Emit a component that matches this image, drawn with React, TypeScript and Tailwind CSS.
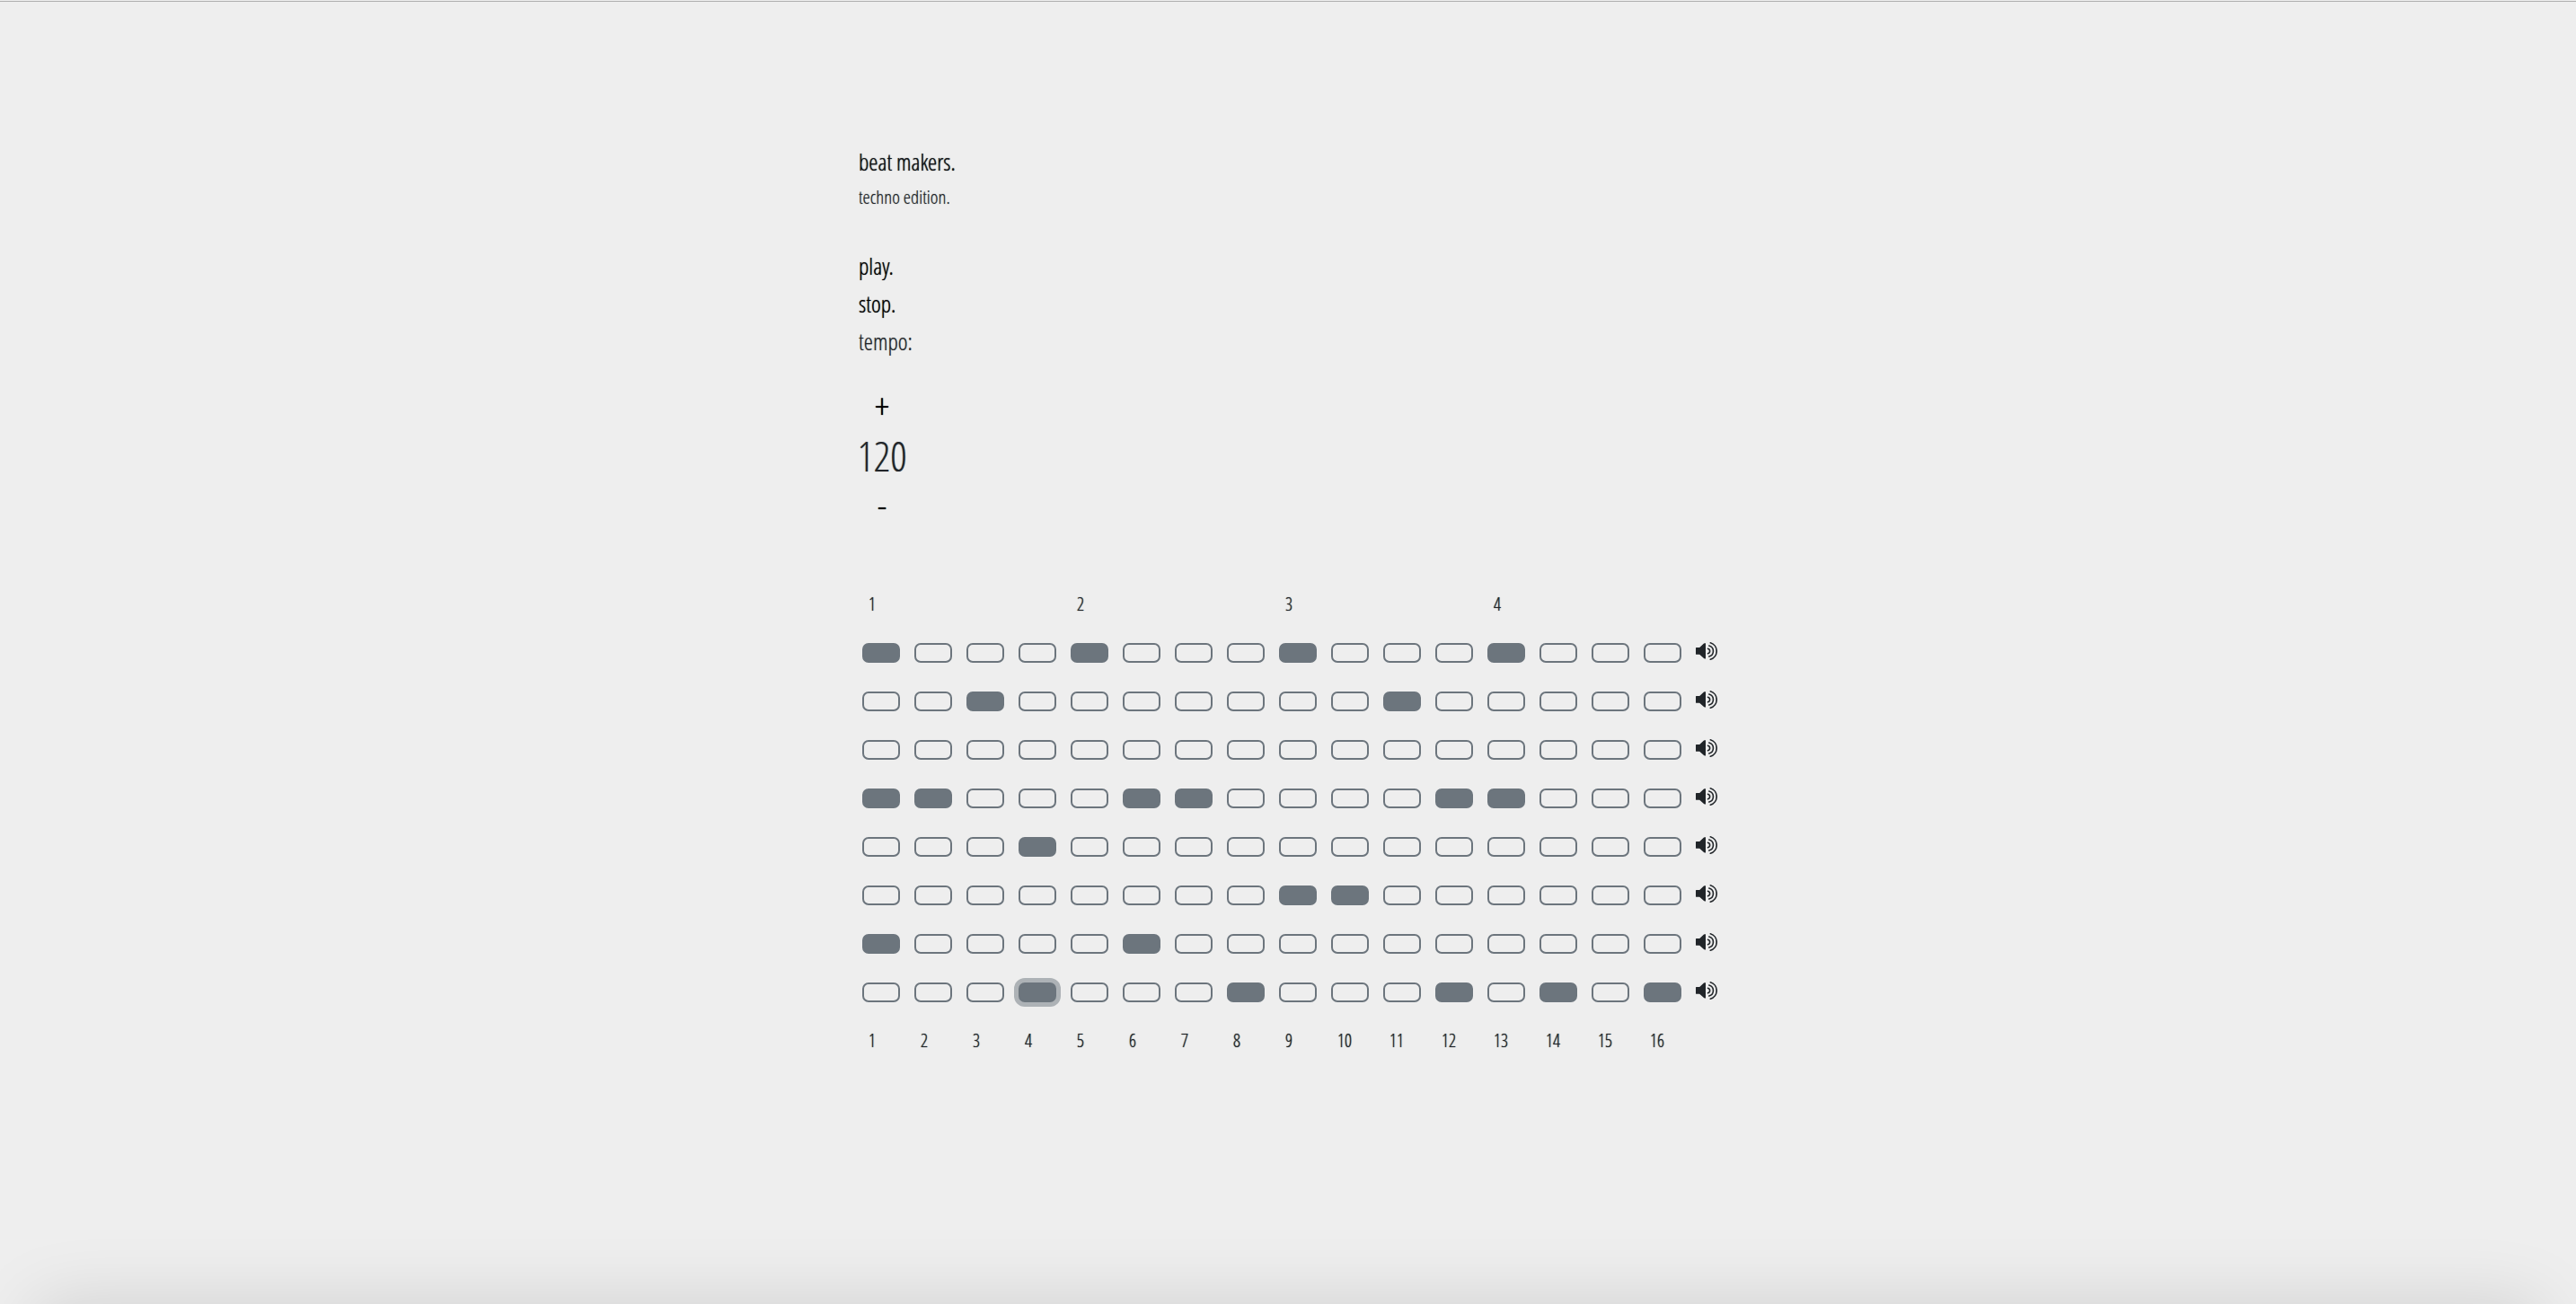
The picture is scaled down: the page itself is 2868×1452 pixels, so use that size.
import { useState } from 'react';

const STEPS = Array.from({ length: 16 }, (_, i) => i + 1);

const INITIAL_PATTERN: number[][] = [
  [1, 5, 9, 13],
  [3, 11],
  [],
  [1, 2, 6, 7, 12, 13],
  [4],
  [9, 10],
  [1, 6],
  [4, 8, 12, 14, 16],
];

type StepProps = {
  track: number;
  step: number;
  active: boolean;
  selected: boolean;
  onToggle: () => void;
};

function Step({ track, step, active, selected, onToggle }: StepProps) {
  return (
    <button
      type="button"
      aria-label={`Track ${track}, step ${step}`}
      aria-pressed={active}
      onClick={onToggle}
      className={`h-[22px] w-[42px] rounded-[7px] border-2 border-[#6c757d] outline-none ${
        active ? 'bg-[#6c757d]' : 'bg-transparent'
      } ${selected ? 'ring-[5px] ring-[#6c757d]/50' : ''}`}
    />
  );
}

function SpeakerIcon() {
  return (
    <svg viewBox="0 0 24 22" className="h-[22px] w-6" aria-hidden="true">
      <path d="M0 7.6Q0 7 .6 7H4.2L9 2.6Q9.4 2.2 10 2.2H11V19.5H10Q9.4 19.5 9 19.1L4.2 14.8H.6Q0 14.8 0 14.2Z" fill="currentColor" />
      <g fill="none" stroke="currentColor" strokeWidth="1.6" strokeLinecap="round">
        <path d="M13.5 8.2A2.9 2.9 0 0 1 13.5 13.8" />
        <path d="M14.8 5A6.2 6.2 0 0 1 14.8 17" />
        <path d="M16.3 1.7A9.7 9.7 0 0 1 16.3 20.3" />
      </g>
    </svg>
  );
}

function Labels({ every }: { every: number }) {
  return (
    <div className="flex gap-4 pl-1 text-[20px] leading-[30px] [text-shadow:0_0_1px_currentColor]">
      {STEPS.map((step) => (
        <span key={step} className="w-[42px] pl-[7px]">
          {(step - 1) % every === 0 ? (step - 1) / every + 1 : ''}
        </span>
      ))}
    </div>
  );
}

export default function App() {
  const [pattern, setPattern] = useState(INITIAL_PATTERN);
  const [selected, setSelected] = useState('7-4');
  const [tempo, setTempo] = useState(120);

  const toggle = (track: number, step: number) => {
    setSelected(`${track}-${step}`);
    setPattern((rows) =>
      rows.map((row, i) => {
        if (i !== track) return row;
        return row.includes(step) ? row.filter((s) => s !== step) : [...row, step];
      }),
    );
  };

  return (
    <div className="relative min-h-screen bg-[#eeeeee] pt-px font-['Open_Sans_Condensed_Light','Open_Sans_Condensed',sans-serif] text-[#212529] [text-shadow:0_0_1px_rgb(33_37_41/0.6)]">
      <div className="h-px bg-[#b0b0b0]" />
      <main className="mx-auto w-1/3 min-w-[956px] pt-[157px]">
        <h1 className="text-[26px] leading-[42px] text-[#101316] [text-shadow:0_0_1px_currentColor]">beat makers.</h1>
        <h2 className="text-[21px] leading-[37px]">techno edition.</h2>

        <div className="mt-[37px] flex flex-col items-start text-[26px] leading-[42px]">
          <button type="button" className="text-black [text-shadow:0_0_1px_rgb(0_0_0/0.8)]">play.</button>
          <button type="button" className="text-black [text-shadow:0_0_1px_rgb(0_0_0/0.8)]">stop.</button>
          <span>tempo:</span>
        </div>

        <div className="mt-[26px] flex w-[52px] flex-col items-center">
          <button type="button" aria-label="Increase tempo" onClick={() => setTempo(tempo + 1)} className="text-[40px] leading-[50px] text-black [text-shadow:0_0_1px_black]">
            +
          </button>
          <output className="text-[46px] leading-[60px]">{tempo}</output>
          <button type="button" aria-label="Decrease tempo" onClick={() => setTempo(tempo - 1)} className="text-[40px] leading-[50px] text-black [text-shadow:0_0_1px_black]">
            -
          </button>
        </div>

        <section className="mt-[71px] flex flex-col gap-7">
          <Labels every={4} />
          <div className="flex flex-col gap-8">
            {pattern.map((row, track) => (
              <div key={track} className="flex gap-4 pl-1">
                {STEPS.map((step) => (
                  <Step
                    key={step}
                    track={track + 1}
                    step={step}
                    active={row.includes(step)}
                    selected={selected === `${track}-${step}`}
                    onToggle={() => toggle(track, step)}
                  />
                ))}
                <button type="button" aria-label={`Play track ${track + 1}`} className="-mt-0.5 h-[22px] w-6">
                  <SpeakerIcon />
                </button>
              </div>
            ))}
          </div>
          <Labels every={1} />
        </section>
      </main>

      <div className="pointer-events-none absolute inset-x-0 bottom-0 h-24 overflow-hidden">
        <div className="mx-10 mt-24 h-40 shadow-[0_0_80px_rgba(0,0,0,0.13)]" />
      </div>
    </div>
  );
}
